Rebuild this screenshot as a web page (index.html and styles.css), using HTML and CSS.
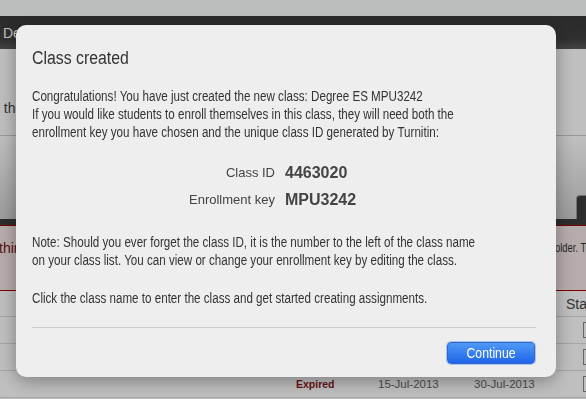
FILE: index.html
```html
<!DOCTYPE html>
<html>
  <head>
    <title>Classes</title>
    <link rel="stylesheet" href="styles.css">
  </head>
  <body>
    <div class="topstrip"></div>
    <div class="navbar"><span class="crumb">Degree ES MPU3242</span></div>
    <div class="intro"><p>t the class name to enter the class.</p></div>
    <div class="tabs"><span class="tab"></span></div>
    <div class="alert">
      <span class="alert-left">thing</span>
      <span class="alert-right">older. T</span>
    </div>

    <table class="classes">
      <thead>
        <tr>
          <th class="col-name"></th>
          <th class="col-status"></th>
          <th class="col-date"></th>
          <th class="col-date"></th>
          <th class="col-stat">Stat</th>
        </tr>
      </thead>
      <tbody>
        <tr>
          <td></td><td></td><td></td><td></td>
          <td><span class="box"></span></td>
        </tr>
        <tr>
          <td></td><td></td><td></td><td></td>
          <td><span class="box"></span></td>
        </tr>
        <tr>
          <td></td>
          <td class="expired">Expired</td>
          <td class="date">15-Jul-2013</td>
          <td class="date">30-Jul-2013</td>
          <td><span class="box"></span></td>
        </tr>
      </tbody>
    </table>

    <div class="overlay"></div>

    <div class="modal">
      <h2 class="modal-title">Class created</h2>
      <p class="modal-text">
        Congratulations! You have just created the new class: Degree ES MPU3242<br>
        If you would like students to enroll themselves in this class, they will need both the<br>
        enrollment key you have chosen and the unique class ID generated by Turnitin:
      </p>
      <dl class="keys">
        <dt>Class ID</dt>
        <dd>4463020</dd>
        <dt>Enrollment key</dt>
        <dd>MPU3242</dd>
      </dl>
      <p class="modal-text note">
        Note: Should you ever forget the class ID, it is the number to the left of the class name<br>
        on your class list. You can view or change your enrollment key by editing the class.
      </p>
      <p class="modal-text hint">Click the class name to enter the class and get started creating assignments.</p>
      <div class="modal-footer">
        <button class="button"><span class="button-label">Continue</span></button>
      </div>
    </div>
  </body>
</html>
```

FILE: styles.css
```css
body {
  margin: 0;
  font-family: "Liberation Sans", Arial, sans-serif;
  font-size: 13px;
  color: #333;
  background-color: #fff;
  overflow: hidden;
}

.topstrip {
  height: 16px;
  background-color: #fbfcfd;
}

.navbar {
  height: 33px;
  background: linear-gradient(#383838, #404040 70%, #5a5a5a);
  box-sizing: border-box;
  color: #fff;
  font-size: 14px;
  line-height: 34px;
  padding-left: 3px;
  white-space: nowrap;
}

.intro {
  height: 86px;
  border-bottom: 1px solid #ccc;
}

.intro p {
  margin: 0;
  padding-top: 51px;
  margin-left: -4px;
  font-size: 14px;
  color: #444;
  white-space: nowrap;
}

.tabs {
  height: 83px;
  background: linear-gradient(#fff, #d0d0d0);
  border-bottom: 6px solid #3c3c3c;
  position: relative;
}

.tab {
  position: absolute;
  right: -10px;
  bottom: 0;
  width: 18px;
  height: 23px;
  background: #3c3c3c;
  border: 1px solid #999;
  border-bottom: none;
  border-radius: 4px 4px 0 0;
}

.alert {
  height: 64px;
  background-color: #f5e6e6;
  border-top: 1px solid #a00;
  border-bottom: 1px solid #a00;
  display: flex;
  justify-content: space-between;
  font-size: 14px;
  color: #7a1010;
  line-height: 44px;
  white-space: nowrap;
}

.alert-left {
  margin-left: -1px;
}

.alert-right {
  display: inline-block;
  color: #333;
  font-size: 13px;
  transform: scaleX(0.72);
  transform-origin: right center;
}

.classes {
  border-collapse: collapse;
  width: 600px;
  font-size: 13px;
}

.classes th {
  height: 25px;
  text-align: left;
  font-weight: normal;
  font-size: 14px;
  color: #444;
  border-bottom: 1px solid #ddd;
  padding: 0;
}

.classes td {
  height: 26px;
  border-bottom: 1px solid #ddd;
  padding: 0;
}

.col-name { width: 295px; }
.col-status { width: 83px; }
.col-date { width: 96px; }

.classes .col-stat {
  position: relative;
  left: -4px;
}

.expired {
  color: #8b1a1a;
  font-weight: bold;
  font-size: 10.5px;
  padding-left: 1px !important;
}

.date {
  color: #666;
  font-size: 11.5px;
}

.box {
  display: inline-block;
  width: 12px;
  height: 14px;
  border: 1px solid #888;
  margin-left: 13px;
  vertical-align: middle;
}

.overlay {
  position: fixed;
  inset: 0;
  background-color: rgba(0, 0, 0, 0.25);
}

.modal {
  position: fixed;
  left: 16px;
  top: 25px;
  width: 540px;
  height: 352px;
  box-sizing: border-box;
  padding: 20px 20px 0 16px;
  background-color: #eee;
  border-radius: 10px;
  box-shadow: 0 4px 18px rgba(0, 0, 0, 0.35);
}

.modal-title {
  margin: 0 0 16px;
  font-size: 18px;
  font-weight: normal;
  color: #333;
  line-height: 26px;
  white-space: nowrap;
  transform: scaleX(0.88);
  transform-origin: left center;
}

.modal-text {
  margin: 0;
  font-size: 14px;
  line-height: 18px;
  color: #333;
  white-space: nowrap;
  transform: scaleX(0.83);
  transform-origin: left center;
}

.keys {
  display: grid;
  grid-template-columns: 243px auto;
  column-gap: 10px;
  row-gap: 9px;
  margin: 23px 0 0;
  align-items: center;
  line-height: 18px;
}

.keys dt {
  text-align: right;
  color: #444;
}

.keys dd {
  margin: 0;
  font-size: 16px;
  font-weight: bold;
  color: #444;
}

.note {
  margin-top: 24px;
}

.hint {
  margin-top: 20px;
}

.modal-footer {
  border-top: 1px solid #ccc;
  margin-top: 20px;
  padding-top: 14px;
  padding-right: 1px;
  display: flex;
  justify-content: flex-end;
}

.button {
  width: 88px;
  height: 22px;
  padding: 0;
  border: 1px solid #2e66c9;
  border-radius: 4px;
  box-shadow: 0 0 0 1px #a8c4f0;
  background: linear-gradient(#5099f6, #1e66e8);
  color: #fff;
  font-family: "Liberation Sans", Arial, sans-serif;
  font-size: 15px;
  line-height: 20px;
  cursor: pointer;
}

.button-label {
  display: inline-block;
  transform: scaleX(0.82);
}
```
